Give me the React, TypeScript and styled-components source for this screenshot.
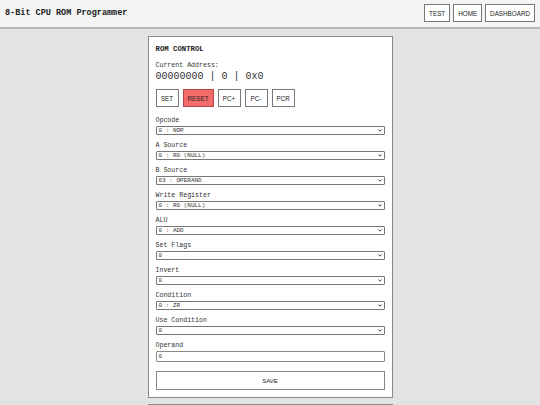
import styled, { createGlobalStyle } from 'styled-components'

const GlobalStyle = createGlobalStyle`
  html, body {
    margin: 0;
    padding: 0;
    background: #e3e3e3;
    font-family: 'Liberation Mono', 'Courier New', monospace;
    color: #222;
  }
  * { box-sizing: border-box; }
`

const Header = styled.header`
  height: 29px;
  display: flex;
  justify-content: space-between;
  align-items: center;
  padding: 0 5px 1px 5px;
  background: #f4f4f4;
  border-bottom: 2px solid #b5b5b5;
`

const Title = styled.h1`
  margin: 0;
  font-size: 8.5px;
  font-weight: bold;
  color: #222;
`

const Nav = styled.nav`
  display: flex;
  gap: 3px;
`

const NavButton = styled.button`
  height: 18px;
  padding: 0 4px;
  background: #fff;
  border: 1px solid #777;
  font-family: 'Liberation Sans', Arial, sans-serif;
  font-size: 6.3px;
  color: #222;
`

const Main = styled.main`
  display: flex;
  flex-direction: column;
  align-items: center;
  gap: 6px;
  padding-top: 7px;
`

const Panel = styled.section`
  width: 245px;
  background: #fff;
  border: 1px solid #8a8a8a;
  padding: 8px 7px 7px 7px;
`

const PanelTitle = styled.h2`
  margin: 0 0 9px 0;
  font-size: 7.3px;
  font-weight: bold;
  color: #222;
`

const AddrLabel = styled.div`
  font-size: 6.6px;
  color: #333;
  margin-bottom: 2px;
`

const AddrValue = styled.div`
  font-size: 10px;
  color: #333;
  margin-bottom: 7px;
`

const ButtonRow = styled.div`
  display: flex;
  gap: 4px;
  margin-bottom: 10px;
`

const CtrlButton = styled.button<{ $danger?: boolean }>`
  height: 18px;
  min-width: 23px;
  padding: 0 4px;
  background: ${p => (p.$danger ? '#f46b6b' : '#fff')};
  border: 1px solid ${p => (p.$danger ? '#b44' : '#777')};
  font-family: 'Liberation Sans', Arial, sans-serif;
  font-size: 6.3px;
  color: #222;
`

const Field = styled.div`
  display: flex;
  flex-direction: column;
  gap: 2px;
  margin-bottom: 7px;
`

const Label = styled.label`
  font-size: 6.6px;
  color: #333;
`

const SelectBox = styled.div`
  position: relative;
  height: 9px;
  border: 1px solid #777;
  border-radius: 1px;
  background: #fff;
  display: flex;
  align-items: center;
  padding-left: 2px;
  font-size: 6px;
  color: #333;
`

const Chevron = styled.svg`
  position: absolute;
  right: 2px;
  top: 2px;
  width: 4px;
  height: 3px;
`

const Input = styled.div`
  height: 11px;
  border: 1px solid #888;
  border-radius: 1px;
  background: #fff;
  display: flex;
  align-items: center;
  padding-left: 2px;
  font-size: 6px;
  color: #333;
`

const SaveButton = styled.button`
  width: 100%;
  height: 19px;
  margin-top: 2px;
  background: #fff;
  border: 1px solid #888;
  font-family: 'Liberation Sans', Arial, sans-serif;
  font-size: 6px;
  color: #222;
`

const fields = [
  ['Opcode', '0 : NOP'],
  ['A Source', '0 : R0 (NULL)'],
  ['B Source', '63 : OPERAND'],
  ['Write Register', '0 : R0 (NULL)'],
  ['ALU', '0 : ADD'],
  ['Set Flags', '0'],
  ['Invert', '0'],
  ['Condition', '0 : ZR'],
  ['Use Condition', '0'],
]

function Select({ value }: { value: string }) {
  return (
    <SelectBox>
      {value}
      <Chevron viewBox="0 0 4 3">
        <path d="M0.5 0.5 L2 2.2 L3.5 0.5" fill="none" stroke="#333" strokeWidth="0.9" />
      </Chevron>
    </SelectBox>
  )
}

export default function App() {
  return (
    <>
      <GlobalStyle />
      <Header>
        <Title>8-Bit CPU ROM Programmer</Title>
        <Nav>
          <NavButton>TEST</NavButton>
          <NavButton>HOME</NavButton>
          <NavButton>DASHBOARD</NavButton>
        </Nav>
      </Header>
      <Main>
        <Panel>
          <PanelTitle>ROM CONTROL</PanelTitle>
          <AddrLabel>Current Address:</AddrLabel>
          <AddrValue>00000000 | 0 | 0x0</AddrValue>
          <ButtonRow>
            <CtrlButton>SET</CtrlButton>
            <CtrlButton $danger>RESET</CtrlButton>
            <CtrlButton>PC+</CtrlButton>
            <CtrlButton>PC-</CtrlButton>
            <CtrlButton>PCR</CtrlButton>
          </ButtonRow>
          {fields.map(([label, value]) => (
            <Field key={label}>
              <Label>{label}</Label>
              <Select value={value} />
            </Field>
          ))}
          <Field>
            <Label>Operand</Label>
            <Input>0</Input>
          </Field>
          <SaveButton>SAVE</SaveButton>
        </Panel>
        <Panel style={{ height: 40 }} />
      </Main>
    </>
  )
}
